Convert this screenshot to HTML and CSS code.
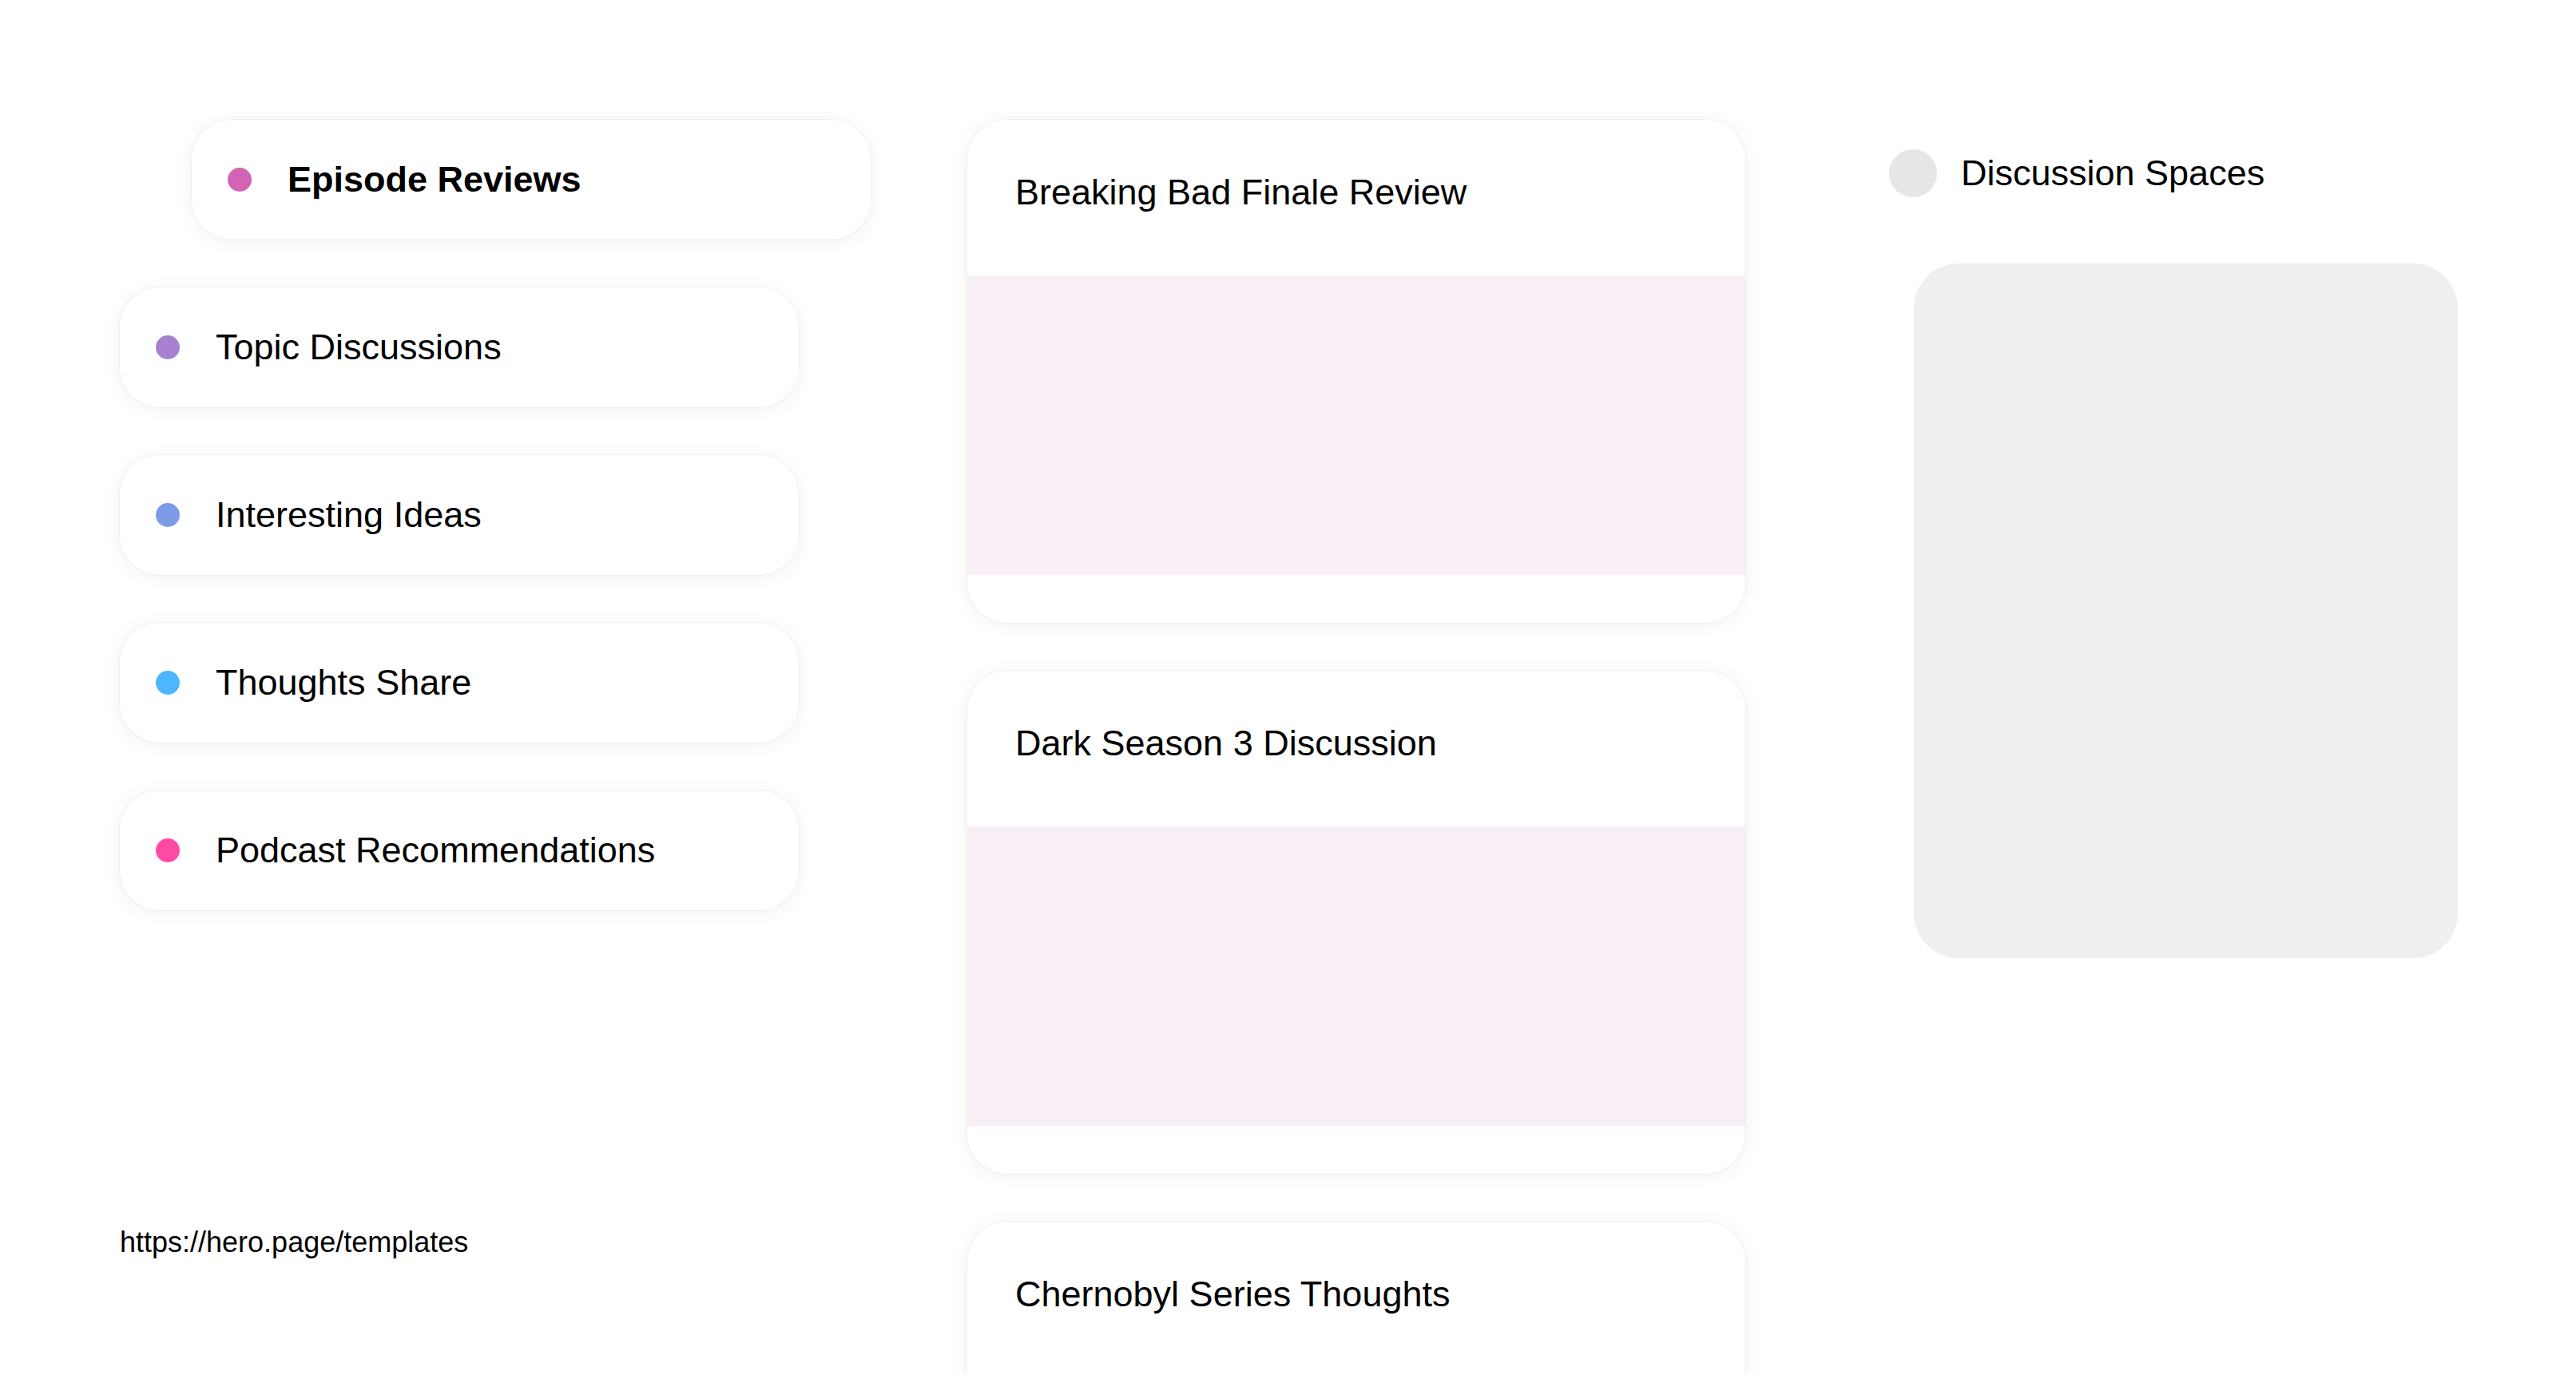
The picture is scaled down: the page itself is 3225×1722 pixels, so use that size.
FILE: index.html
```html
<!DOCTYPE html>
<html lang="en">
<head>
<meta charset="utf-8">
<title>Discussion Spaces</title>
<link rel="stylesheet" href="styles.css">
</head>
<body>
<div class="page">
  <aside class="left">
    <nav class="nav">
      <a class="nav-item active"><span class="dot dot-episode"></span><span>Episode Reviews</span></a>
      <a class="nav-item"><span class="dot dot-topic"></span><span>Topic Discussions</span></a>
      <a class="nav-item"><span class="dot dot-ideas"></span><span>Interesting Ideas</span></a>
      <a class="nav-item"><span class="dot dot-thoughts"></span><span>Thoughts Share</span></a>
      <a class="nav-item"><span class="dot dot-podcast"></span><span>Podcast Recommendations</span></a>
    </nav>
    <div class="url">https://hero.page/templates</div>
  </aside>
  <main class="feed">
    <article class="post">
      <div class="post-head">Breaking Bad Finale Review</div>
      <div class="post-media"></div>
      <div class="post-foot"></div>
    </article>
    <article class="post">
      <div class="post-head">Dark Season 3 Discussion</div>
      <div class="post-media"></div>
      <div class="post-foot"></div>
    </article>
    <article class="post">
      <div class="post-head">Chernobyl Series Thoughts</div>
      <div class="post-media"></div>
      <div class="post-foot"></div>
    </article>
  </main>
  <section class="side">
    <div class="side-head"><span class="side-dot"></span><span>Discussion Spaces</span></div>
    <div class="side-box"></div>
  </section>
</div>
</body>
</html>
```

FILE: styles.css
```css
html, body {
  margin: 0;
  background: #ffffff;
}

body {
  font-family: "Liberation Sans", Arial, sans-serif;
  color: #000000;
}

.page {
  display: flex;
  align-items: flex-start;
  padding: 150px 0 0 150px;
}

.left {
  width: 850px;
  flex: none;
  display: flex;
  flex-direction: column;
}

.nav {
  display: flex;
  flex-direction: column;
  gap: 60px;
}

.nav-item {
  width: 850px;
  height: 150px;
  box-sizing: border-box;
  display: flex;
  align-items: center;
  gap: 45px;
  padding-left: 45px;
  border-radius: 50px;
  background: #ffffff;
  box-shadow: 0 0 0 1px rgba(0, 0, 0, 0.035), 0 2px 22px rgba(0, 0, 0, 0.06);
  font-size: 45px;
  color: #000000;
}

.nav-item.active {
  margin-left: 90px;
  font-weight: 700;
}

.dot {
  width: 30px;
  height: 30px;
  border-radius: 50%;
  flex: none;
}

.dot-episode { background: #d264b6; }
.dot-topic { background: #a780cf; }
.dot-ideas { background: #7b9be6; }
.dot-thoughts { background: #4db6ff; }
.dot-podcast { background: #ff4aa3; }

.url {
  margin-top: 395px;
  font-size: 36px;
}

.feed {
  width: 974px;
  flex: none;
  margin-left: 211px;
  display: flex;
  flex-direction: column;
  gap: 60px;
}

.post {
  background: #ffffff;
  border-radius: 50px;
  overflow: hidden;
  box-shadow: 0 0 0 1px rgba(0, 0, 0, 0.035), 0 2px 22px rgba(0, 0, 0, 0.06);
}

.post-head {
  height: 195px;
  box-sizing: border-box;
  padding: 65px 60px 0;
  font-size: 45px;
}

.post-media {
  height: 375px;
  background: #f8eef6;
}

.post-foot {
  height: 60px;
}

.side {
  width: 712px;
  flex: none;
  margin-left: 180px;
  padding-top: 37px;
}

.side-head {
  height: 60px;
  display: flex;
  align-items: center;
  gap: 30px;
  font-size: 45px;
}

.side-dot {
  width: 60px;
  height: 60px;
  border-radius: 50%;
  background: #e6e6e6;
  flex: none;
}

.side-box {
  margin: 83px 0 0 31px;
  width: 681px;
  height: 870px;
  border-radius: 56px;
  background: #efefef;
}
```
